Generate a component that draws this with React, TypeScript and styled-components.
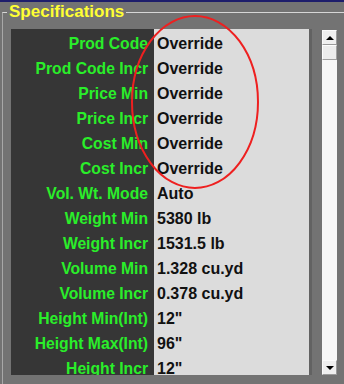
import React from "react";
import styled, { createGlobalStyle } from "styled-components";

const GlobalStyle = createGlobalStyle`
  html, body { margin: 0; padding: 0; background: #737373; }
  body { width: 344px; height: 384px; overflow: hidden; font-family: "Liberation Sans", Arial, sans-serif; }
`;

const Page = styled.div`
  position: relative;
  width: 344px;
  height: 384px;
  background: #737373;
  overflow: hidden;
  display: flex;
  flex-direction: column;
`;

const TopBar = styled.div`
  height: 2px;
  flex: none;
  background: #1d1d6b;
`;

const Frame = styled.fieldset`
  margin: 0 -12px 0 2px;
  padding: 7px 0 0 8px;
  border: none;
  border-top: 1px solid #d6d6d6;
  border-left: 1px solid #a8a8a8;
  flex: 1;
  min-width: 0;
`;

const Legend = styled.legend`
  margin-left: -4px;
  padding: 0 2px;
  font-size: 17px;
  line-height: 20px;
  font-weight: bold;
  color: #ffff33;
`;

const Body = styled.div`
  display: flex;
  align-items: flex-start;
  height: 346px;
`;

const List = styled.div`
  width: 298px;
  height: 346px;
  overflow: hidden;
  padding-top: 2px;
  box-sizing: border-box;
  background: linear-gradient(to right, #363636 143px, #dcdcdc 143px);
`;

const Divider = styled.div`
  width: 3px;
  height: 346px;
  background: #626262;
`;

const Row = styled.div`
  display: grid;
  grid-template-columns: 143px 1fr;
  height: 25px;
  font-size: 16px;
  line-height: 25px;
  font-weight: bold;
  white-space: nowrap;
`;

const Label = styled.div`
  color: #2aee2a;
  text-align: right;
  padding-right: 6px;
  font-size: 15.7px;
`;

const Value = styled.div`
  color: #111111;
  padding-left: 3px;
`;

const Scrollbar = styled.div`
  margin: 1px 0 0 10px;
  width: 15px;
  height: 345px;
  display: flex;
  flex-direction: column;
  background-color: #f6f6f6;
  background-image: radial-gradient(#e4e4e4 0.6px, transparent 0.7px);
  background-size: 2px 2px;
`;

const ArrowButton = styled.div<{ $down?: boolean }>`
  width: 15px;
  height: 15px;
  box-sizing: border-box;
  background: #efefef;
  border: 1px solid;
  border-color: #fbfbfb #9a9a9a #9a9a9a #fbfbfb;
  display: flex;
  align-items: center;
  justify-content: center;
  margin-top: ${(p) => (p.$down ? "auto" : "0")};
  &::after {
    content: "";
    width: 0;
    height: 0;
    border-left: 4px solid transparent;
    border-right: 4px solid transparent;
    ${(p) =>
      p.$down
        ? "border-top: 4px solid #000;"
        : "border-bottom: 4px solid #000;"}
  }
`;

const Thumb = styled.div`
  width: 15px;
  height: 15px;
  box-sizing: border-box;
  background: #ececec;
  border: 1px solid;
  border-color: #fdfdfd #a0a0a0 #a0a0a0 #fdfdfd;
`;

const Annotation = styled.svg`
  position: absolute;
  left: 0;
  top: 0;
  pointer-events: none;
`;

const rows: [string, string][] = [
  ["Prod Code", "Override"],
  ["Prod Code Incr", "Override"],
  ["Price Min", "Override"],
  ["Price Incr", "Override"],
  ["Cost Min", "Override"],
  ["Cost Incr", "Override"],
  ["Vol. Wt. Mode", "Auto"],
  ["Weight Min", "5380 lb"],
  ["Weight Incr", "1531.5 lb"],
  ["Volume Min", "1.328 cu.yd"],
  ["Volume Incr", "0.378 cu.yd"],
  ["Height Min(Int)", '12"'],
  ["Height Max(Int)", '96"'],
  ["Height Incr", '12"'],
];

export default function App() {
  return (
    <>
      <GlobalStyle />
      <Page>
        <TopBar />
        <Frame>
          <Legend>Specifications</Legend>
          <Body>
            <List>
              {rows.map(([l, v]) => (
                <Row key={l}>
                  <Label>{l}</Label>
                  <Value>{v}</Value>
                </Row>
              ))}
            </List>
            <Divider />
            <Scrollbar>
              <ArrowButton />
              <Thumb />
              <ArrowButton $down />
            </Scrollbar>
          </Body>
        </Frame>
        <Annotation width="344" height="384" viewBox="0 0 344 384">
          <ellipse
            cx="195"
            cy="102"
            rx="63"
            ry="86"
            fill="none"
            stroke="#ee2020"
            strokeWidth="2"
          />
        </Annotation>
      </Page>
    </>
  );
}
